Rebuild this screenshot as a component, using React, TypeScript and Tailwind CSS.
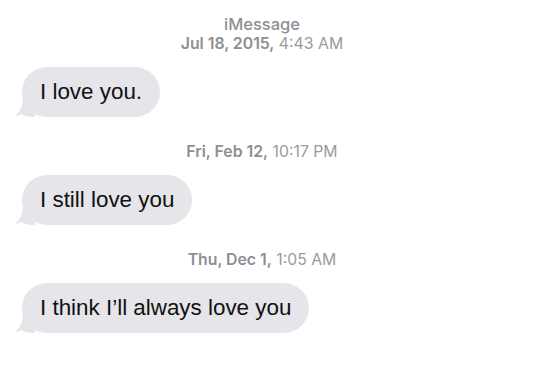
import React from "react";

const font = { fontFamily: '"Liberation Sans", Arial, sans-serif' };

function Stamp({ date, time, top }: { date: string; time: string; top?: string }) {
  return (
    <div className="flex flex-col items-center pr-[16px] font-['Inter',sans-serif] text-[15.8px] leading-[19px] text-[#8e8e93]">
      {top && <div className="text-[16.5px] font-medium">{top}</div>}
      <div>
        <span className="font-semibold">{date}</span> <span className="text-[#9a9a9f]">{time}</span>
      </div>
    </div>
  );
}

function Bubble({ text }: { text: string }) {
  return (
    <div className="flex pl-[22px]">
      <div className="relative flex h-[50px] items-center rounded-[25px] bg-[#e5e5ea] px-[18px] text-[22.4px] text-[#111]">
        <svg className="absolute bottom-0 left-[-7px]" width="22" height="22" viewBox="0 0 22 22">
          <path d="M8 0 L20 0 L20 22 C14 22 9 21 6 19 C4 20 2 21 0 21 C5 17 8 11 8 0 Z" fill="#e5e5ea" />
        </svg>
        <span className="relative">{text}</span>
      </div>
    </div>
  );
}

export default function App() {
  return (
    <div className="h-[371px] w-[540px] overflow-hidden bg-white pt-[15px]" style={font}>
      <Stamp top="iMessage" date="Jul 18, 2015," time="4:43 AM" />
      <div className="mt-[14px]">
        <Bubble text="I love you." />
      </div>
      <div className="mt-[25px]">
        <Stamp date="Fri, Feb 12," time="10:17 PM" />
      </div>
      <div className="mt-[14px]">
        <Bubble text="I still love you" />
      </div>
      <div className="mt-[25px]">
        <Stamp date="Thu, Dec 1," time="1:05 AM" />
      </div>
      <div className="mt-[14px]">
        <Bubble text="I think I’ll always love you" />
      </div>
    </div>
  );
}
